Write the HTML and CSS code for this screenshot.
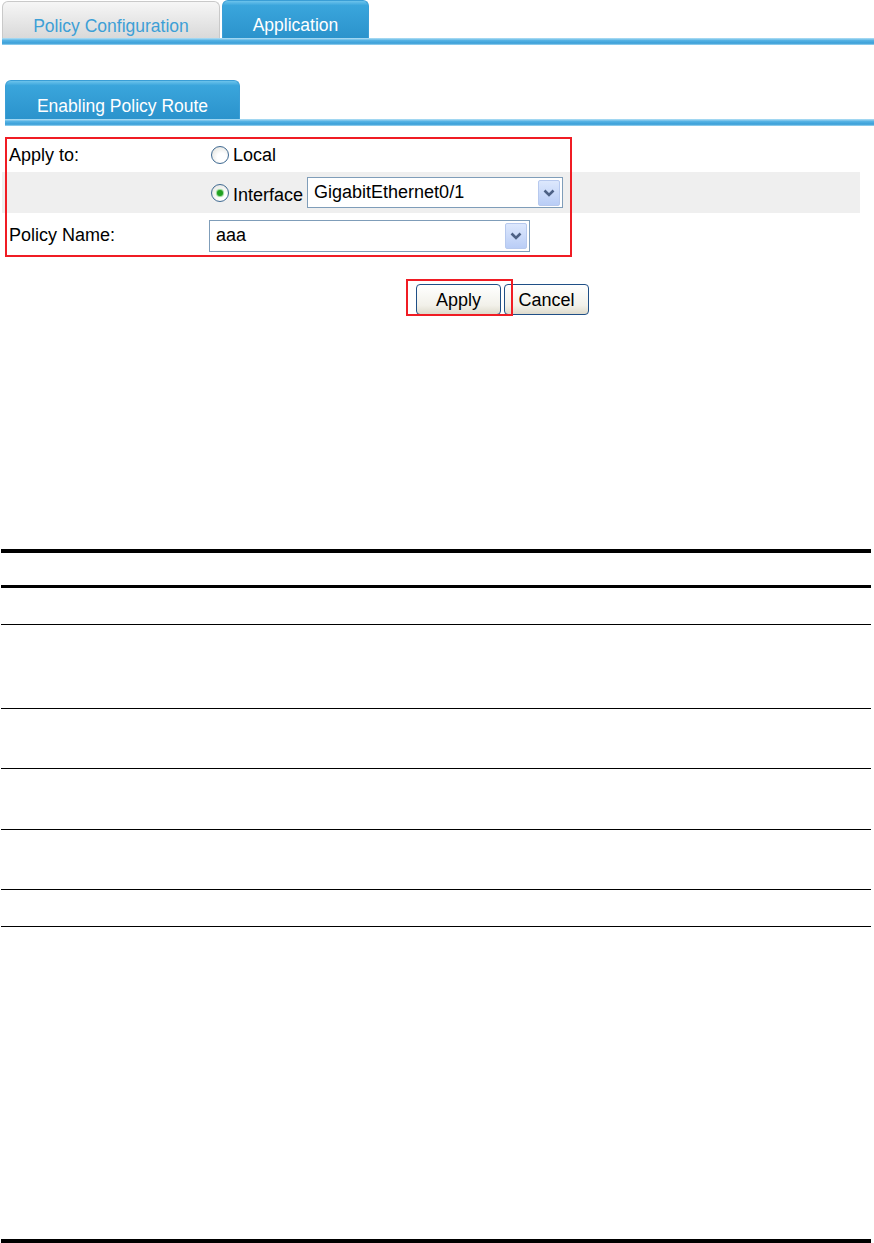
FILE: index.html
```html
<!DOCTYPE html>
<html lang="en">
<head>
  <meta charset="UTF-8" />
  <title>Enabling Policy Route</title>
  <link rel="stylesheet" href="styles.css">
</head>
<body>
  <div class="tabs top-tabs">
    <div class="tab tab-off">Policy Configuration</div>
    <div class="tab tab-on app-tab">Application</div>
  </div>
  <div class="tab-bar top-bar"></div>

  <div class="tabs sub-tabs">
    <div class="tab tab-on sub-tab">Enabling Policy Route</div>
  </div>
  <div class="tab-bar sub-bar"></div>

  <div class="form">
    <div class="row row-apply">
      <div class="label">Apply to:</div>
      <div class="value">
        <span class="radio"></span>
        <span class="radio-text">Local</span>
      </div>
    </div>
    <div class="row row-iface">
      <div class="label"></div>
      <div class="value">
        <span class="radio checked"></span>
        <span class="radio-text">Interface</span>
        <div class="select iface-select">
          <span class="select-text">GigabitEthernet0/1</span>
          <span class="select-btn">
            <svg width="14" height="12" viewBox="0 0 14 12"><path d="M2.5 3.5 L7 8 L11.5 3.5" fill="none" stroke="#4d6185" stroke-width="2.6"/></svg>
          </span>
        </div>
      </div>
    </div>
    <div class="row row-policy">
      <div class="label">Policy Name:</div>
      <div class="value">
        <div class="select policy-select">
          <span class="select-text">aaa</span>
          <span class="select-btn">
            <svg width="14" height="12" viewBox="0 0 14 12"><path d="M2.5 3.5 L7 8 L11.5 3.5" fill="none" stroke="#4d6185" stroke-width="2.6"/></svg>
          </span>
        </div>
      </div>
    </div>
    <div class="mark mark-form"></div>
  </div>

  <div class="buttons">
    <button class="btn">Apply</button>
    <button class="btn">Cancel</button>
    <div class="mark mark-apply"></div>
  </div>

  <div class="doc-table">
    <div class="doc-row head"></div>
    <div class="doc-row r1"></div>
    <div class="doc-row r2"></div>
    <div class="doc-row r3"></div>
    <div class="doc-row r4"></div>
    <div class="doc-row r5"></div>
    <div class="doc-row r6"></div>
  </div>

  <div class="page-rule"></div>
</body>
</html>
```

FILE: styles.css
```css
body {
  margin: 0;
  background: #fff;
  color: #000;
  font-family: "Liberation Sans", Arial, sans-serif;
}

/* tabs */
.tabs {
  display: flex;
  align-items: flex-end;
}

.top-tabs {
  height: 38px;
  padding-left: 2px;
  gap: 2px;
}

.sub-tabs {
  margin-top: 35px;
  height: 39px;
  padding-left: 5px;
}

.tab {
  display: flex;
  align-items: center;
  justify-content: center;
  box-sizing: border-box;
  font-size: 17.5px;
  border-radius: 6px 6px 0 0;
}

.tab-off {
  width: 218px;
  height: 37px;
  color: #3d9fd6;
  background: linear-gradient(#f6f6f6, #d9d9d9);
  border: 1px solid #c9c9c9;
  border-bottom: none;
  padding-top: 12px;
}

.tab-on {
  color: #fff;
  background: linear-gradient(#6cc3ec 0, #3aa5dc 12%, #2b93cc 100%);
  border: 1px solid #3a9ed6;
  border-bottom: none;
}

.app-tab {
  width: 147px;
  height: 38px;
  padding-top: 12px;
}

.sub-tab {
  width: 235px;
  height: 39px;
  padding-top: 12px;
}

.tab-bar {
  height: 7px;
  background: linear-gradient(#b4e0f5, #55b2e4 35%, #3a9fd8 75%, #a5d8f1);
}

.top-bar {
  margin-left: 2px;
}

.sub-bar {
  margin-left: 5px;
}

/* form */
.form {
  position: relative;
  margin: 11px 14px 0 2px;
  font-size: 18px;
}

.row {
  display: flex;
  align-items: center;
}

.row-apply { height: 35px; }
.row-iface { height: 41px; background: #efefef; }
.row-policy { height: 43px; }

.label {
  width: 200px;
  padding-left: 7px;
  padding-top: 2px;
}

.value {
  display: flex;
  align-items: center;
}

.radio {
  width: 16px;
  height: 16px;
  border: 1px solid #3f6a92;
  border-radius: 50%;
  background: radial-gradient(circle at 60% 65%, #fff 30%, #dcdcd6 100%);
  margin-left: 2px;
  margin-right: 4px;
  display: flex;
  align-items: center;
  justify-content: center;
}

.radio.checked::after {
  content: "";
  width: 6px;
  height: 6px;
  border-radius: 50%;
  background: #21a121;
  box-shadow: 0 0 1px 1px #8fd68f;
}

.radio-text {
  padding-top: 2px;
}

.row-iface .radio-text {
  margin-right: 4px;
  padding-top: 6px;
}

.select {
  display: flex;
  align-items: center;
  justify-content: space-between;
  box-sizing: border-box;
  border: 1px solid #7f9db9;
  background: #fff;
  padding: 0 2px 0 6px;
}

.iface-select {
  width: 256px;
  height: 31px;
}

.policy-select {
  width: 321px;
  height: 32px;
  margin-top: 2px;
}

.select-btn {
  width: 22px;
  height: 26px;
  box-sizing: border-box;
  border: 1px solid #b7c9ee;
  border-radius: 2px;
  background: linear-gradient(#dde8fd, #b9cdf6);
  display: flex;
  align-items: center;
  justify-content: center;
}

.mark {
  position: absolute;
  border: 2px solid #f01c24;
  box-sizing: border-box;
}

.mark-form {
  left: 3px;
  top: 0;
  width: 567px;
  height: 120px;
}

/* buttons */
.buttons {
  position: relative;
  display: flex;
  gap: 3px;
  margin: 28px 0 0 416px;
}

.btn {
  width: 85px;
  height: 31px;
  font-family: "Liberation Sans", Arial, sans-serif;
  font-size: 18px;
  color: #000;
  border: 1px solid #1f4f86;
  border-radius: 4px;
  background: linear-gradient(#ffffff, #f2f1ea 70%, #dedbcc);
  padding: 2px 0 0;
}

.mark-apply {
  left: -10px;
  top: -5px;
  width: 107px;
  height: 37px;
}

/* document table rules */
.doc-table {
  margin: 234px 3px 0 1px;
  border-top: 4px solid #000;
}

.doc-row {
  border-bottom: 1px solid #000;
}

.doc-row.head { height: 32px; border-bottom: 3px solid #000; }
.doc-row.r1 { height: 36px; }
.doc-row.r2 { height: 83px; }
.doc-row.r3 { height: 59px; }
.doc-row.r4 { height: 60px; }
.doc-row.r5 { height: 59px; }
.doc-row.r6 { height: 36px; }

.page-rule {
  margin: 312px 3px 0 1px;
  height: 4px;
  background: #000;
}
```
